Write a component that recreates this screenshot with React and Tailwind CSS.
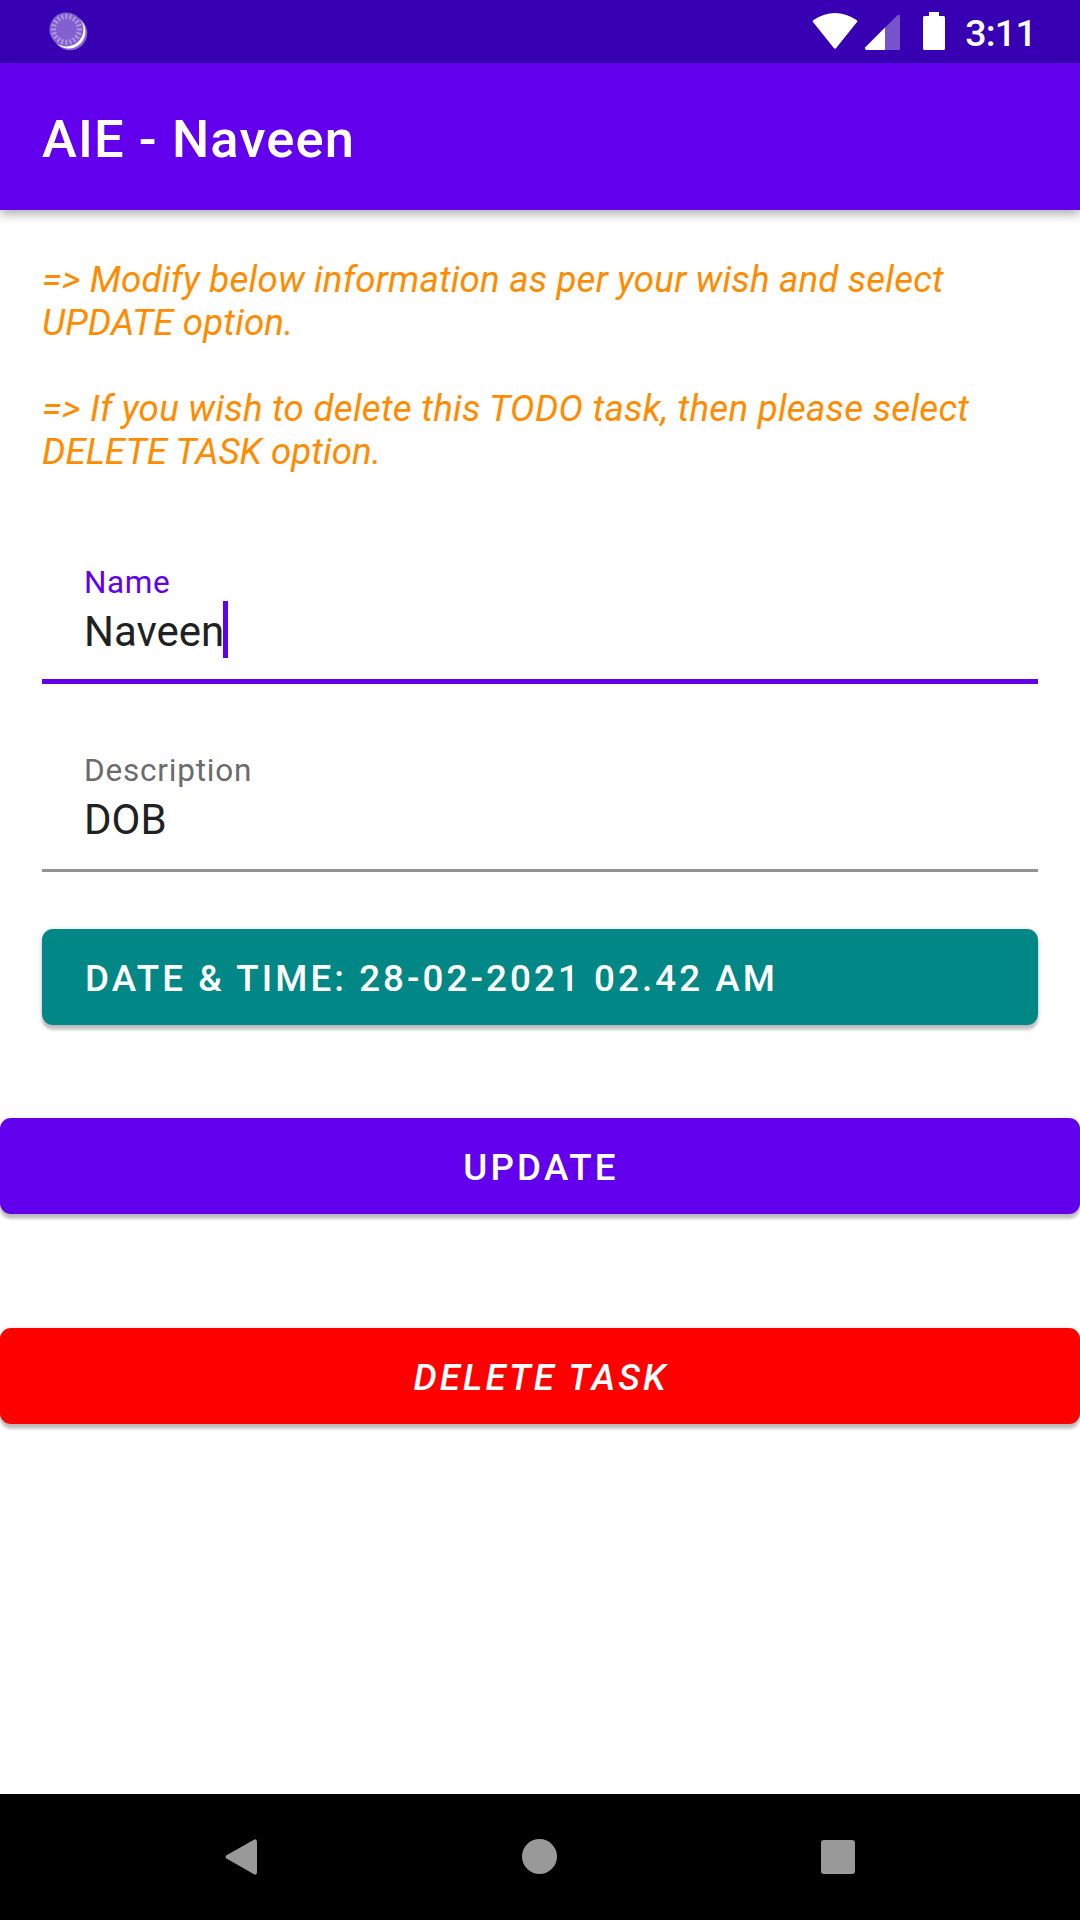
const BUTTON_SHADOW = 'shadow-[0_5px_3px_rgba(0,0,0,0.2),0_1px_5px_rgba(0,0,0,0.16)]';

function LauncherIcon() {
  const ticks = Array.from({ length: 20 }, (_, i) => i * 18);
  return (
    <svg width="40" height="63" viewBox="48 0 40 63">
      <circle cx="70" cy="33" r="17.3" fill="#8668d4" />
      <circle cx="68.7" cy="31.7" r="16.7" fill="#fff" />
      <circle cx="66.4" cy="29.4" r="17" fill="#8360d0" />
      <g stroke="#b29bdf" strokeWidth="1.8">
        {ticks.map((a) => (
          <path key={a} d="M66.4 13.8V19" transform={`rotate(${a} 66.4 29.4)`} />
        ))}
      </g>
    </svg>
  );
}

function Field({ label, value, focused }) {
  return (
    <div className={`flex h-[147px] flex-col border-solid pl-[42px] pt-[27px] ${focused ? 'border-b-[5px] border-[#6200ee]' : 'border-b-[3px] border-[#939393]'}`}>
      <span className={`h-[37px] whitespace-nowrap text-[31.5px] leading-[37px] ${focused ? 'tracking-[0.6px] text-[#6200ee]' : 'tracking-[0.8px] text-[#6b6b6b]'}`}>{label}</span>
      <div className="flex h-[57px] items-center">
        <span className="whitespace-nowrap pt-[4px] text-[42px] leading-[57px] text-[#212121]">{value}</span>
        {focused && <span className="-ml-px h-[57px] w-[5px] bg-[#6200ee]" />}
      </div>
    </div>
  );
}

export default function App() {
  return (
    <div className="flex h-[1920px] w-[1080px] flex-col overflow-hidden bg-white" style={{ fontFamily: 'Roboto, sans-serif' }}>
      <div className="flex h-[63px] shrink-0 items-center justify-between bg-[#3700b3] pl-[48px] pr-[44px] text-white">
        <LauncherIcon />
        <div className="flex items-center">
          <svg width="153" height="63" viewBox="812 0 153 63" fill="#fff">
            <path d="M813 22Q812 21 813.5 20Q835 6 856.5 20Q858 21 857 22L836.2 48Q835 49.5 833.8 48Z" />
            <path d="M897.5 15.3Q900 13.8 900 16.5V48.5Q900 50 898.5 50H885V27.5Z" opacity=".33" />
            <path d="M885 27.5V50H866Q864.5 49.5 865.3 47.3Z" />
            <path d="M929 12H939V16H943.5Q945 16 945 17.5V48.5Q945 50 943.5 50H924.5Q923 50 923 48.5V17.5Q923 16 924.5 16H929Z" />
          </svg>
          <span className="mt-[4px] text-[37.5px] font-medium leading-none tracking-[-0.75px]">3:11</span>
        </div>
      </div>
      <header className="flex h-[147px] shrink-0 items-center bg-[#6200ee] px-[42px] shadow-[0_4px_10px_rgba(0,0,0,0.33)]">
        <h1 className="mt-[5px] whitespace-nowrap text-[52.5px] font-medium leading-none tracking-[1.12px] text-white">AIE - Naveen</h1>
      </header>
      <main className="flex grow flex-col">
        <div className="mt-[48px] whitespace-nowrap px-[42px] text-[36.75px] italic leading-[43px] text-[#ff8c00]">
          <p><span className="tracking-[0.16px]">=&gt; Modify below information as per your wish and select</span><br /><span className="tracking-[0.1px]">UPDATE option.</span></p>
          <p className="mt-[43px]"><span className="tracking-[0.24px]">=&gt; If you wish to delete this TODO task, then please select</span><br />DELETE TASK option.</p>
        </div>
        <div className="mx-[42px] mt-[64px] flex flex-col gap-[41px]">
          <Field label="Name" value="Naveen" focused />
          <Field label="Description" value="DOB" />
        </div>
        <button className={`mx-[42px] mt-[57px] flex h-[96px] shrink-0 items-center whitespace-nowrap rounded-[11px] bg-[#018786] pl-[43px] pt-[3px] text-[36.75px] font-medium tracking-[3.06px] text-white ${BUTTON_SHADOW}`}>DATE &amp; TIME: 28-02-2021 02.42 AM</button>
        <button className={`mt-[93px] flex h-[96px] shrink-0 items-center justify-center rounded-[11px] bg-[#6200ee] pl-[2px] pt-[3px] text-[36.75px] font-medium tracking-[3.2px] text-white ${BUTTON_SHADOW}`}>UPDATE</button>
        <button className={`mt-[114px] flex h-[96px] shrink-0 items-center justify-center rounded-[11px] bg-[#ff0000] pl-[2px] pt-[3px] text-[36.75px] font-medium italic tracking-[3.1px] text-white ${BUTTON_SHADOW}`}>DELETE TASK</button>
      </main>
      <nav className="flex h-[126px] shrink-0 items-center justify-between bg-black px-[225px] pb-px">
        <svg width="32" height="36" viewBox="0 0 32 36" fill="#999">
          <path d="M28.5 1Q32 -1 32 3V33Q32 37 28.5 35L1.5 19.5Q-.5 18 1.5 16.3Z" />
        </svg>
        <div className="size-[35px] rounded-full bg-[#999]" />
        <div className="size-[34px] rounded-[3px] bg-[#999]" />
      </nav>
    </div>
  );
}
